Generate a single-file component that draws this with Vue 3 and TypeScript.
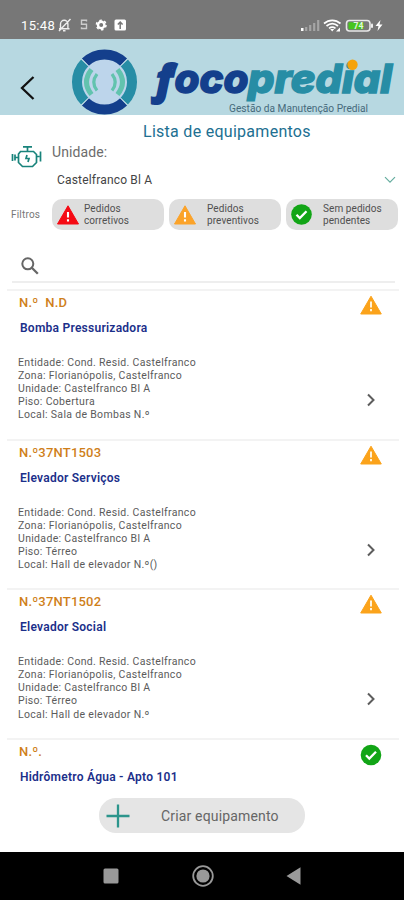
<script setup lang="ts">
interface Equipment {
  code: string
  name: string
  details: string[]
  ok: boolean
}

interface Filter {
  lines: [string, string]
  kind: 'corrective' | 'preventive' | 'clear'
}

const filters: Filter[] = [
  { lines: ['Pedidos', 'corretivos'], kind: 'corrective' },
  { lines: ['Pedidos', 'preventivos'], kind: 'preventive' },
  { lines: ['Sem pedidos', 'pendentes'], kind: 'clear' },
]

const common = [
  'Entidade: Cond. Resid. Castelfranco',
  'Zona: Florianópolis, Castelfranco',
  'Unidade: Castelfranco Bl A',
]

const items: Equipment[] = [
  { code: 'N.º  N.D', name: 'Bomba Pressurizadora', details: [...common, 'Piso: Cobertura', 'Local: Sala de Bombas N.º'], ok: false },
  { code: 'N.º37NT1503', name: 'Elevador Serviços', details: [...common, 'Piso: Térreo', 'Local: Hall de elevador N.º()'], ok: false },
  { code: 'N.º37NT1502', name: 'Elevador Social', details: [...common, 'Piso: Térreo', 'Local: Hall de elevador N.º'], ok: false },
  { code: 'N.º.', name: 'Hidrômetro Água - Apto 101', details: [], ok: true },
]
</script>

<template>
  <div class="screen">
    <div class="status">
      <span class="time">15:48</span>
      <svg class="status-left" width="72" height="16" viewBox="0 0 72 16" fill="none">
        <g stroke="#eee" stroke-width="1.4">
          <path d="M3.500 11.500V7a3.700 3.700 0 0 1 7.400 0v4.500M2 11.700h10.500M6 13.800h2.500M2 14L13.500 2" />
          <path d="M29.500 4.500V3.300h-5v4h5v4.200h-5v-1.300M24.500 7.300h5" stroke="#ccc" />
        </g>
        <circle cx="44.200" cy="8" r="3.200" stroke="#fff" stroke-width="2.400" />
        <circle cx="44.200" cy="8" r="4.800" stroke="#fff" stroke-width="1.500" stroke-dasharray="2.500 2.530" />
        <rect x="57.500" y="2.500" width="11.500" height="11" rx="1.500" fill="#fff" />
        <path d="M63.200 12V5.500M60.800 7.500l2.400-2.400 2.400 2.400" stroke="#777" stroke-width="1.500" />
      </svg>
      <svg class="status-right" width="84" height="16" viewBox="0 0 84 16" fill="none">
        <rect x="1" y="11" width="2.500" height="3" fill="#fff" />
        <path d="M6.200 14v-4M10.200 14V8M14.200 14V6M18.200 14V3" stroke="#a5a5a5" stroke-width="2.200" />
        <path d="M24 6.500c5-4.300 11.500-4.300 16.500 0M26.500 9c3.700-3 8-3 11.500 0M29 11.400c2-1.500 4.500-1.500 6.500 0" stroke="#fff" stroke-width="1.700" />
        <path d="M32.200 14.500l-2-2.500h4zM36 14.500h4v-4z" fill="#fff" />
        <rect x="46.500" y="3.500" width="23.500" height="10.500" rx="3" stroke="#e8e8e8" stroke-width="1.600" />
        <rect x="48.500" y="5.300" width="15" height="7" rx="1" fill="#46c51c" />
        <rect x="71" y="6.500" width="2" height="4.500" rx="1" fill="#eee" />
        <text x="53.500" y="12" font-size="8.500" font-weight="700" fill="#e4f5dc">74</text>
        <path d="M80.500 3l-5 6h3l-1 5 5-6.500h-3z" fill="#fff" />
      </svg>
    </div>

    <header class="header">
      <svg class="back" width="16" height="26" viewBox="0 0 16 26" fill="none">
        <path d="M13.500 2L2 13l11.500 11" stroke="#111" stroke-width="2.300" />
      </svg>
      <svg class="logo" width="336" height="76" viewBox="68 39 336 76" fill="none">
        <circle cx="104.500" cy="82" r="27.500" fill="#bdd5eb" />
        <g stroke-width="10">
          <path d="M85.400 62.200a27.500 27.500 0 0 1 38.200 0M85.400 101.800a27.500 27.500 0 0 0 38.200 0" stroke="#143f8c" />
          <path d="M84.700 62.900a27.500 27.500 0 0 0 0 38.200M124.300 62.900a27.500 27.500 0 0 1 0 38.200" stroke="#278da5" />
        </g>
        <path d="M79.500 57l9 9M129.500 57l-9 9M79.500 107l9-9M129.500 107l-9-9" stroke="#b7d8e1" stroke-width="1" />
        <g stroke="#62c3ae">
          <path d="M91.500 69.500q-10 12.500 0 25M117.500 69.500q10 12.500 0 25" stroke-width="5" />
          <path d="M97 74q-6.500 8.500 0 16.500M112 74q6.500 8.500 0 16.500" stroke-width="3.200" />
        </g>
        <g fill="#143f8c" stroke="#143f8c">
          <text class="brand-f" x="156" y="93.500">f</text>
          <text class="brand" x="174.500" y="93.200" textLength="74" lengthAdjust="spacingAndGlyphs">oco</text>
        </g>
        <text class="brand" x="248" y="93.200" textLength="144" lengthAdjust="spacingAndGlyphs" fill="#278da5" stroke="#278da5">predial</text>
        <circle cx="352.500" cy="64.800" r="5.200" fill="#f5a30b" />
        <text class="tagline" x="229" y="112" textLength="139" lengthAdjust="spacingAndGlyphs" fill="#466a7b">Gestão da Manutenção Predial</text>
      </svg>
    </header>

    <main class="content">
      <h1 class="title">Lista de equipamentos</h1>
      <section class="unit">
        <svg class="engine" width="31" height="24" viewBox="0 0 31 24" fill="none" stroke="#18837b" stroke-width="1.700">
          <path d="M12 1.800h9M16.500 2v4M9.500 6.500h13l3 3v8l-4 4h-10l-4-4V9zM1.500 9v7M4 12.500h3.500M4 9.500v6M29.500 6.500v10M25.500 11.500h3" />
          <path d="M16 10l-1 3.500h3L17 17" />
        </svg>
        <div class="unit-fields">
          <span class="unit-label">Unidade:</span>
          <div class="select">
            <span>Castelfranco Bl A</span>
            <svg width="12" height="8" viewBox="0 0 12 8" fill="none"><path d="M1 1.200l5 5 5-5" stroke="#65ad9f" stroke-width="1.200" /></svg>
          </div>
        </div>
      </section>

      <section class="filters">
        <span class="filters-label">Filtros</span>
        <button v-for="f in filters" :key="f.kind" class="chip" :class="f.kind">
          <svg v-if="f.kind === 'clear'" width="21" height="21" viewBox="0 0 21 21">
            <circle cx="10.500" cy="10.500" r="10.300" fill="#12a516" />
            <path d="M5.500 10.800l3.300 3.300 6.700-6.800" fill="none" stroke="#fff" stroke-width="2.300" />
          </svg>
          <svg v-else width="22" height="20" viewBox="0 0 22 20">
            <path class="tri" d="M11 .8L21.500 19H.5z" stroke-width="1" stroke-linejoin="round" />
            <path d="M11 7v5.500M11 14.200v2.300" stroke="#fff" stroke-width="2.100" />
          </svg>
          <span>{{ f.lines[0] }}<br />{{ f.lines[1] }}</span>
        </button>
      </section>

      <div class="search">
        <svg width="18" height="18" viewBox="0 0 18 18" fill="none" stroke="#666">
          <circle cx="6.800" cy="6.800" r="5.500" stroke-width="2" /><path d="M10.800 10.800l6 6" stroke-width="2.300" />
        </svg>
      </div>

      <div class="list">
        <article v-for="item in items" :key="item.code" class="card">
          <div class="info">
            <div class="code">{{ item.code }}</div>
            <div class="name">{{ item.name }}</div>
            <div class="details">
              <div v-for="line in item.details" :key="line">{{ line }}</div>
            </div>
          </div>
          <div class="side">
            <svg v-if="item.ok" width="22" height="22" viewBox="0 0 22 22">
              <circle cx="11" cy="11" r="10.300" fill="#12a516" />
              <path d="M6 11.300l3.300 3.300 6.700-6.800" fill="none" stroke="#fff" stroke-width="2.300" />
            </svg>
            <svg v-else width="22" height="20" viewBox="0 0 22 20">
              <path d="M11 1.200L21.300 19H.7z" fill="#fba31b" stroke="#fba31b" stroke-linejoin="round" />
              <path d="M11 6.500v6M11 14v2.300" stroke="#fff3dc" stroke-width="2" />
            </svg>
            <svg v-if="!item.ok" class="go" width="10" height="14" viewBox="0 0 10 14" fill="none">
              <path d="M2 1.500L7.500 7 2 12.500" stroke="#5d5d5d" stroke-width="2" />
            </svg>
          </div>
        </article>
      </div>
      <div class="footer">
        <button class="create">
          <svg width="24" height="24" viewBox="0 0 24 24" stroke="#2c958c" stroke-width="2.300"><path d="M12 .5v23M.5 12h23" /></svg>
          <span>Criar equipamento</span>
        </button>
      </div>
    </main>

    <nav class="navbar">
      <svg width="16" height="16" viewBox="0 0 16 16"><rect x=".5" y=".5" width="15" height="15" rx="1.500" fill="#999" /></svg>
      <svg width="22" height="22" viewBox="0 0 22 22"><circle cx="11" cy="11" r="9.800" fill="none" stroke="#999" stroke-width="1.800" /><circle cx="11" cy="11" r="6.600" fill="#999" /></svg>
      <svg width="15" height="18" viewBox="0 0 15 18"><path d="M14.500.3v17.400L.5 9z" fill="#999" /></svg>
    </nav>
  </div>
</template>

<style>
body {
  margin: 0;
}
</style>

<style scoped>
.screen {
  width: 404px;
  height: 900px;
  display: flex;
  flex-direction: column;
  overflow: hidden;
  background: #fff;
  font-family: Roboto, "Liberation Sans", sans-serif;
}
.status {
  flex: none;
  height: 39px;
  box-sizing: border-box;
  padding: 11px 20px 0 21px;
  display: flex;
  align-items: center;
  background: #777;
}
.time {
  width: 35px;
  font-size: 13px;
  letter-spacing: 0.35px;
  color: #fff;
}
.status-left {
  margin-left: 1px;
}
.status-right {
  margin-left: auto;
}
.header {
  flex: none;
  height: 76px;
  display: flex;
  align-items: center;
  background: #b7d8e1;
}
.back {
  margin: 21px 32px 0 20px;
}
.logo {
  flex: none;
}
.brand {
  font: italic 800 40px Inter, sans-serif;
  font-feature-settings: "cv11" 1;
  stroke-width: 1.5px;
}
.brand-f {
  font: italic 800 41px "Open Sans", sans-serif;
  stroke-width: 2px;
}
.tagline {
  font: 10px Roboto, sans-serif;
}
.content {
  flex: 1;
  min-height: 0;
  display: flex;
  flex-direction: column;
}
.title {
  flex: none;
  margin: 6px 0 0 143px;
  font-size: 16px;
  line-height: 21px;
  font-weight: 400;
  letter-spacing: 0.28px;
  color: #216f91;
}
.unit {
  flex: none;
  height: 57px;
  display: flex;
  padding: 0 7px 0 11px;
}
.engine {
  flex: none;
  margin-top: 3px;
}
.unit-fields {
  flex: 1;
  margin-left: 10px;
}
.unit-label {
  display: block;
  font-size: 14px;
  line-height: 20px;
  letter-spacing: 0.1px;
  color: #6c6c6c;
}
.select {
  display: flex;
  align-items: center;
  justify-content: space-between;
  margin: 10px 1px 0 5px;
  font-size: 12px;
  line-height: 16px;
  letter-spacing: 0.18px;
  color: #444;
}
.filters {
  flex: none;
  display: flex;
  height: 31px;
  gap: 5px;
  align-items: center;
}
.filters-label {
  width: 36px;
  margin-left: 11px;
  font-size: 10px;
  letter-spacing: 0.2px;
  color: #777;
}
.chip {
  display: flex;
  align-items: center;
  width: 112px;
  height: 31px;
  padding: 0 0 0 5px;
  border: 0;
  border-radius: 10px;
  background: #dedede;
  font: 10px/12px Roboto, sans-serif;
  letter-spacing: 0.08px;
  color: #505050;
  text-align: left;
}
.corrective span {
  margin-left: 5px;
}
.preventive span {
  margin-left: 11px;
}
.clear span {
  margin-left: 11px;
}
.corrective .tri {
  fill: #f50a14;
  stroke: #f50a14;
}
.preventive .tri {
  fill: #fba32a;
  stroke: #fba32a;
}
.search {
  flex: none;
  height: 53px;
  box-sizing: border-box;
  margin: 0 9px 0 12px;
  padding: 27px 0 0 9px;
  border-bottom: 2px solid #eee;
}
.list {
  flex: 1;
  min-height: 0;
  overflow: hidden;
  margin: 6px 5px 0 7px;
}
.card {
  display: flex;
  justify-content: space-between;
  box-sizing: border-box;
  height: 149.600px;
  padding-left: 11px;
  border-top: 2px solid #f3f3f3;
}
.code {
  margin: 3px 0 0 1px;
  font-size: 13px;
  line-height: 18px;
  font-weight: 500;
  letter-spacing: 0.2px;
  color: #cf7f1b;
  white-space: pre;
}
.name {
  margin: 7px 0 0 2px;
  font-size: 12px;
  line-height: 18px;
  font-weight: 600;
  letter-spacing: 0.25px;
  color: #1b2f8a;
}
.details {
  margin-top: 19px;
  font-size: 10.500px;
  line-height: 13.100px;
  letter-spacing: 0.32px;
  color: #5b5b5b;
}
.side {
  width: 39px;
  padding-top: 4px;
  display: flex;
  flex-direction: column;
}
.go {
  margin: 78px 0 0 6px;
}
.footer {
  flex: none;
  height: 54px;
  box-sizing: border-box;
  padding-left: 99px;
}
.create {
  display: flex;
  align-items: center;
  width: 206px;
  height: 35px;
  padding: 0 0 0 7px;
  border: 0;
  border-radius: 17px;
  background: #e5e5e5;
  font: 14px Roboto, sans-serif;
  letter-spacing: 0.16px;
  color: #666;
}
.create span {
  margin-left: 31px;
}
.navbar {
  flex: none;
  height: 48px;
  box-sizing: border-box;
  display: flex;
  align-items: center;
  padding: 0 103px;
  justify-content: space-between;
  background: #000;
}
</style>
